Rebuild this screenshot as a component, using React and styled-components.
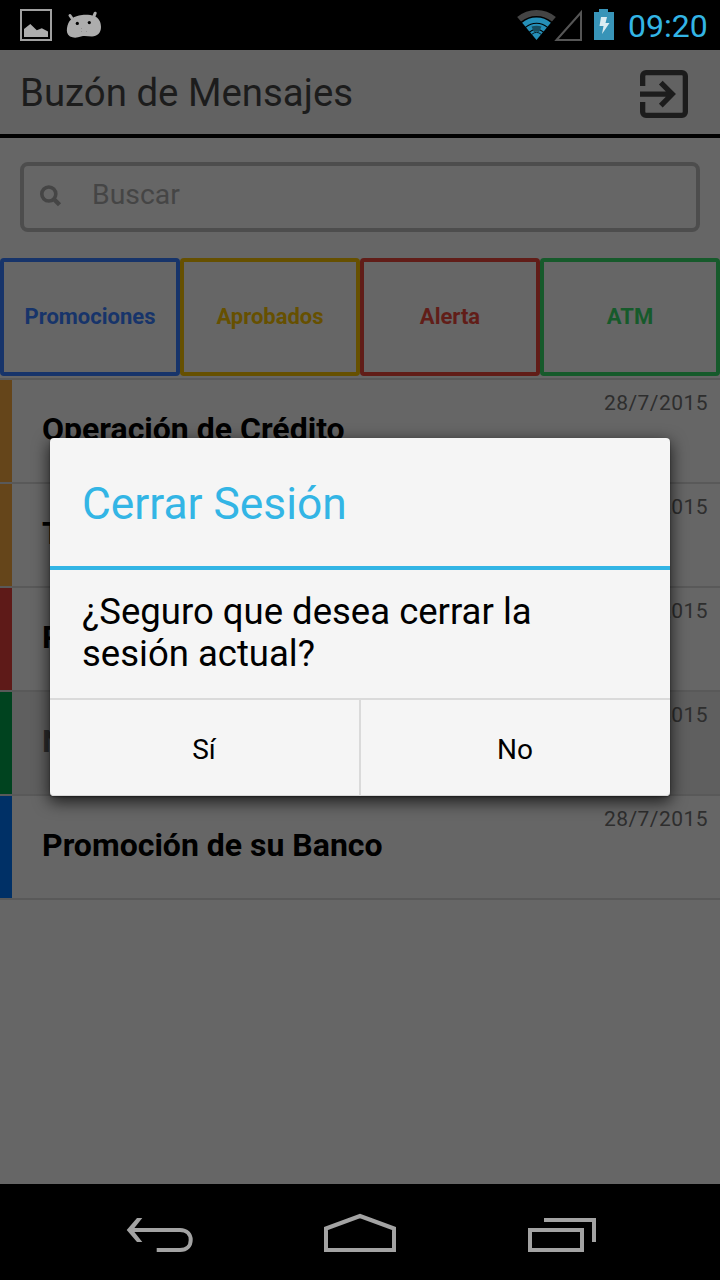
import React from "react";
import styled, { createGlobalStyle } from "styled-components";

const GlobalStyle = createGlobalStyle`
  *, *::before, *::after { box-sizing: border-box; }
  body { margin: 0; background: #000; font-family: Roboto, "Noto Sans", sans-serif; }
  button { font: inherit; background: none; border: 0; padding: 0; margin: 0; }
`;

const Screen = styled.div`
  position: relative;
  width: 720px;
  height: 1280px;
  display: flex;
  flex-direction: column;
  background: #666;
  overflow: hidden;
`;

const StatusBar = styled.div`
  height: 50px;
  flex: none;
  display: flex;
  align-items: center;
  justify-content: space-between;
  background: #000;
`;

const StatusGroup = styled.div`
  display: flex;
  align-items: center;
  height: 50px;
`;

const Clock = styled.span`
  width: 80px;
  margin: 2px 12px 0 13px;
  font-size: 32px;
  line-height: 40px;
  white-space: nowrap;
  color: #33b5e5;
`;

const Header = styled.header`
  height: 88px;
  flex: none;
  display: flex;
  align-items: center;
  justify-content: space-between;
  padding: 0 32px 0 20px;
  background: #626262;
  border-bottom: 4px solid #000;
`;

const Title = styled.h1`
  margin: 2px 0 0;
  font-size: 38.4px;
  font-weight: 400;
  line-height: 48px;
  color: #1c1c1c;
`;

const IconButton = styled.button`
  display: flex;
  margin-top: 4px;
`;

const SearchBox = styled.div`
  flex: none;
  display: flex;
  align-items: center;
  height: 70px;
  margin: 24px 20px 26px;
  padding-left: 16px;
  border: 4px solid #4d4d4d;
  border-radius: 8px;
`;

const Placeholder = styled.span`
  margin-left: 30px;
  margin-top: -4px;
  font-size: 28.4px;
  line-height: 34px;
  color: #454545;
`;

const Tabs = styled.div`
  flex: none;
  display: grid;
  grid-template-columns: repeat(4, 1fr);
  height: 120px;
`;

const Tab = styled.button`
  height: 118px;
  padding-bottom: 2px;
  border: 4px solid ${(p) => p.$color};
  border-radius: 4px;
  color: ${(p) => p.$color};
  font-size: 22px;
  font-weight: 700;
`;

const MessageList = styled.div`
  flex: 1;
  border-top: 2px solid #595959;
`;

const MessageRow = styled.div`
  display: flex;
  height: 104px;
  background: ${(p) => (p.$read ? "#5f5f5f" : "#666")};
  border-bottom: 2px solid #595959;
`;

const Stripe = styled.div`
  width: 12px;
  background: ${(p) => p.$color};
`;

const MessageTitle = styled.div`
  flex: 1;
  margin: 31px 0 0 30px;
  font-size: 32px;
  font-weight: 700;
  line-height: 36px;
  white-space: nowrap;
  color: ${(p) => (p.$read ? "#2b2b2b" : "#000")};
`;

const MessageDate = styled.time`
  padding: 11px 12px 0 0;
  font-size: 21px;
  line-height: 24px;
  letter-spacing: 0.45px;
  color: #2e2e2e;
`;

const NavBar = styled.nav`
  flex: none;
  display: flex;
  justify-content: space-between;
  height: 96px;
  padding: 24px 120px 0;
  background: #000;
`;

const NavButton = styled.button`
  width: 80px;
  height: 56px;
`;

const Dialog = styled.div`
  position: absolute;
  left: 50px;
  top: 438px;
  width: 620px;
  height: 358px;
  display: flex;
  flex-direction: column;
  background: #f5f5f5;
  border-radius: 4px;
  box-shadow: 0 5px 16px 1px rgba(0, 0, 0, 0.7), 0 1px 2px rgba(0, 0, 0, 0.4), inset 0 -1px 0 #d8d8d8;
`;

const DialogTitle = styled.h2`
  height: 132px;
  margin: 0;
  padding: 39px 32px 0;
  font-size: 44.3px;
  font-weight: 400;
  line-height: 54px;
  color: #33b5e5;
  border-bottom: 4px solid #33b5e5;
`;

const DialogText = styled.p`
  flex: 1;
  margin: 0;
  padding: 21px 32px 0;
  font-size: 36.5px;
  line-height: 42px;
  color: #000;
`;

const DialogActions = styled.div`
  display: flex;
  height: 98px;
  border-top: 2px solid #dadada;
`;

const DialogButton = styled.button`
  flex: 1;
  padding: 2px 1px 0 0;
  font-size: 28px;
  color: #000;

  & + & {
    border-left: 2px solid #dadada;
  }
`;

const StatusIcons = () => (
  <svg width="120" height="50" viewBox="0 0 120 50" fill="none">
    <rect x="21" y="10" width="30" height="30" stroke="#a0a0a0" strokeWidth="2" />
    <path d="M24 37V29l6.300-5 6.500 6.300 5-2 6.200 3.200V37z" fill="#adadad" />
    <path d="M70 15.500l3.500 5M95.200 13.200l-2.500 6" stroke="#adadad" strokeWidth="3" strokeLinecap="round" />
    <path d="M67 28c1-7 5-11 12-12.500 4-1 11-1 15 .5 5 2 7 6 7 11 0 6-4 9.500-9 9.500-4 0-7-1-11 0-4 1.500-8 1.500-11 0-3-2-3.500-5-3-8.500z" fill="#adadad" />
    <circle cx="77.300" cy="23.400" r="1.600" fill="#000" />
    <circle cx="89.300" cy="22.600" r="1.600" fill="#000" />
    <path d="M81.500 28v1M81.500 31v1M86.500 31v1" stroke="#929292" strokeWidth="1" />
  </svg>
);

const SignalIcons = () => (
  <svg width="98" height="50" viewBox="517 0 98 50" fill="none">
    <path d="M519.100 19.300A27 27 0 0 1 553.900 19.300" stroke="#444" strokeWidth="6" />
    <path d="M523.800 24.800A19.800 19.800 0 0 1 549.200 24.800" stroke="#258fb8" strokeWidth="5.200" />
    <path d="M527.700 29.500A13.700 13.700 0 0 1 545.300 29.500" stroke="#258fb8" strokeWidth="5" />
    <path d="M530.100 32.300A10 10 0 0 1 542.900 32.300L536.500 40z" fill="#258fb8" />
    <path d="M531.500 26.500q5-1.500 10 0l-2.500 5.500q-2.500-1-5 0z" fill="#174e61" />
    <path d="M531.800 34.300A7.400 7.400 0 0 1 541.200 34.300" stroke="#061e28" strokeWidth="1" />
    <path d="M556.500 40L581 12.500V40z" stroke="#555" strokeWidth="2" />
    <path d="M594 12h5V9h9v3h6v28h-20z" fill="#3894b8" />
    <path d="M601 17h6l-1.500 6h4l-7.500 11 1.500-8h-4z" fill="#dcecf2" />
  </svg>
);

const ExitIcon = () => (
  <svg width="48" height="48" viewBox="0 0 48 48" fill="none" stroke="#1c1c1c" strokeWidth="5.300">
    <path d="M2.650 16V6a3.350 3.350 0 0 1 3.350-3.350h36A3.350 3.350 0 0 1 45.350 6v36A3.350 3.350 0 0 1 42 45.350H6A3.350 3.350 0 0 1 2.650 42V32" />
    <path d="M0 24.200H32M20.800 12.600L32.200 24.100 20.800 35.600" />
  </svg>
);

const SearchIcon = () => (
  <svg width="22" height="24" viewBox="0 0 22 24" fill="none" stroke="#454545">
    <circle cx="8.800" cy="9" r="7" strokeWidth="3.600" />
    <path d="M13.500 13.700L19.500 19.800" strokeWidth="4.400" />
  </svg>
);

const navIcons = {
  Back: (
    <>
      <path d="M10 22H60C67 22 70.700 26.500 70.700 32S67 42 60 42H36.700" />
      <path d="M6.700 22L17 10h5.300L12.800 22l9.500 12H17z" fill="#a3a3a3" stroke="none" />
    </>
  ),
  Home: <path d="M6 42V20.500L40 8l34 12.500V42z" />,
  Recents: <path d="M10 22h52v20H10zM24 12h50v22" />,
};

const tabs = [
  { label: "Promociones", color: "#17346a" },
  { label: "Aprobados", color: "#665000" },
  { label: "Alerta", color: "#611d18" },
  { label: "ATM", color: "#165a2b" },
];

const messages = [
  { title: "Operación de Crédito", color: "#65451a" },
  { title: "T", color: "#65451a" },
  { title: "P", color: "#5e1a18" },
  { title: "N", color: "#00431f", read: true },
  { title: "Promoción de su Banco", color: "#003066" },
];

export default function App() {
  return (
    <Screen>
      <GlobalStyle />
      <StatusBar>
        <StatusGroup>
          <StatusIcons />
        </StatusGroup>
        <StatusGroup>
          <SignalIcons />
          <Clock>09:20</Clock>
        </StatusGroup>
      </StatusBar>
      <Header>
        <Title>Buzón de Mensajes</Title>
        <IconButton>
          <ExitIcon />
        </IconButton>
      </Header>
      <SearchBox>
        <SearchIcon />
        <Placeholder>Buscar</Placeholder>
      </SearchBox>
      <Tabs>
        {tabs.map((t) => (
          <Tab key={t.label} $color={t.color}>{t.label}</Tab>
        ))}
      </Tabs>
      <MessageList>
        {messages.map((m) => (
          <MessageRow key={m.title} $read={m.read}>
            <Stripe $color={m.color} />
            <MessageTitle $read={m.read}>{m.title}</MessageTitle>
            <MessageDate>28/7/2015</MessageDate>
          </MessageRow>
        ))}
      </MessageList>
      <NavBar>
        {Object.entries(navIcons).map(([name, icon]) => (
          <NavButton key={name}>
            <svg width="80" height="56" viewBox="0 0 80 56" fill="none" stroke="#a3a3a3" strokeWidth="4">
              {icon}
            </svg>
          </NavButton>
        ))}
      </NavBar>
      <Dialog>
        <DialogTitle>Cerrar Sesión</DialogTitle>
        <DialogText>¿Seguro que desea cerrar la sesión actual?</DialogText>
        <DialogActions>
          <DialogButton>Sí</DialogButton>
          <DialogButton>No</DialogButton>
        </DialogActions>
      </Dialog>
    </Screen>
  );
}
